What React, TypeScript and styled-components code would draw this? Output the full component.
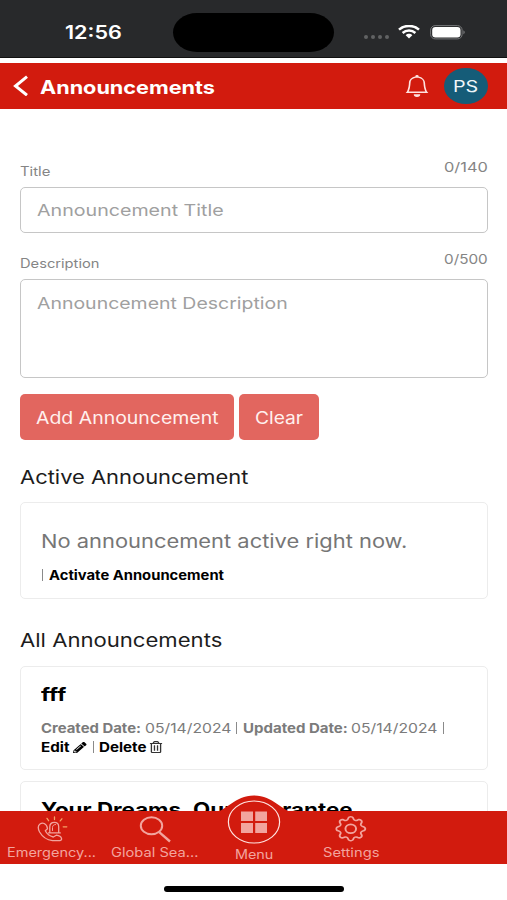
import React from "react";
import styled, { createGlobalStyle } from "styled-components";
import { BsBell, BsGear } from "react-icons/bs";
import { FaPencilAlt, FaRegTrashAlt } from "react-icons/fa";

const red = "#d21b0e";
const pink = "#f2a49e";

const GlobalStyle = createGlobalStyle`
  *, *::before, *::after { box-sizing: border-box; }
  body { margin: 0; background: #fff; font-family: Inter, "Liberation Sans", sans-serif; }
  svg { display: block; flex: none; }
`;

const Phone = styled.div`
  width: 507px;
  height: 900px;
  display: flex;
  flex-direction: column;
  overflow: hidden;
  background: #fff;
`;

/* Wide lettering: the slot reserves the final width, the glyphs are stretched to it. */
const Slot = styled.span<{ $w: number }>`
  display: block;
  flex: none;
  width: ${(p) => p.$w}px;
`;

const Glyphs = styled.span<{ $k: number; $size: number; $weight?: number; $color?: string }>`
  display: block;
  width: max-content;
  white-space: pre;
  transform: scaleX(${(p) => p.$k});
  transform-origin: 0 50%;
  font-size: ${(p) => p.$size}px;
  font-weight: ${(p) => p.$weight ?? 400};
  color: ${(p) => p.$color ?? "inherit"};
`;

type WideProps = { w: number; k?: number; size: number; weight?: number; color?: string; children: string };

const Wide = ({ w, k = 1.18, size, weight, color, children }: WideProps) => (
  <Slot $w={w}>
    <Glyphs $k={k} $size={size} $weight={weight} $color={color}>
      {children}
    </Glyphs>
  </Slot>
);

const WideIcon = styled.span<{ $w: number; $h: number; $color?: string }>`
  display: flex;
  flex: none;
  align-items: center;
  justify-content: center;
  width: ${(p) => p.$w}px;
  height: ${(p) => p.$h}px;
  color: ${(p) => p.$color ?? "inherit"};

  svg {
    transform: scaleX(${(p) => p.$w / p.$h});
  }
`;

const StatusBar = styled.div`
  flex: none;
  height: 58px;
  display: flex;
  align-items: flex-start;
  background: #28292b;
  border-bottom: 1px solid #111;
  color: #fff;
`;

const Clock = styled.div`
  width: 173px;
  padding: 21px 0 0 65px;
  line-height: 22px;
`;

const Island = styled.div`
  width: 161px;
  height: 39px;
  margin-top: 12.5px;
  border-radius: 24px / 19.5px;
  background: #000;
`;

const Dots = styled.div`
  display: flex;
  gap: 3px;
  margin: 34.5px 0 0 30px;
`;

const Dot = styled.i`
  width: 4px;
  height: 4px;
  border-radius: 50%;
  background: #616264;
`;

const StatusIcon = styled.div<{ $top: number; $left: number }>`
  margin: ${(p) => p.$top}px 0 0 ${(p) => p.$left}px;
`;

const Header = styled.header`
  flex: none;
  height: 46.5px;
  margin-top: 4.7px;
  padding: 0 19px 0 13px;
  display: flex;
  align-items: center;
  background: ${red};
  color: #fff;
`;

const HeaderTitle = styled.h1`
  flex: 1;
  margin: 3px 0 0 11px;
  line-height: 24px;
`;

const BellSlot = styled.div`
  margin-right: 14px;
  color: #ffe3e0;
`;

const Avatar = styled.div`
  width: 44px;
  height: 36px;
  padding-left: 9px;
  border-radius: 50%;
  background: #155c78;
  color: #eef6f9;
  line-height: 37px;
`;

const Main = styled.main`
  flex: 1;
  min-height: 0;
  overflow: hidden;
  padding: 48.8px 19.5px 0 20px;
`;

const LabelRow = styled.div`
  height: 29px;
  display: flex;
  justify-content: space-between;
  line-height: 18px;
  color: #858585;
`;

const LabelName = styled.label`
  padding-top: 5px;
`;

const Field = styled.div<{ $h: number; $top?: number }>`
  height: ${(p) => p.$h}px;
  padding: ${(p) => p.$top ?? 12}px 16px;
  border: 1.5px solid #c6c6c6;
  border-radius: 5px;
  line-height: 20px;
  color: #a0a0a0;
`;

const FieldGroup = styled.section<{ $gap: number }>`
  margin-bottom: ${(p) => p.$gap}px;
`;

const Buttons = styled.div`
  display: flex;
  gap: 5px;
`;

const Button = styled.button<{ $w: number }>`
  width: ${(p) => p.$w}px;
  height: 46px;
  padding: 1px 0 0 15.5px;
  border: 0;
  border-radius: 5px;
  background: #e2665f;
  color: #fff0ee;
  font: inherit;
  line-height: 46px;
  text-align: left;
`;

const SectionTitle = styled.h2<{ $top: number; $bottom?: number }>`
  margin: ${(p) => p.$top}px 0 ${(p) => p.$bottom ?? 14}px;
  line-height: 24px;
  color: #1c1c1c;
`;

const Card = styled.article<{ $h: number }>`
  height: ${(p) => p.$h}px;
  margin-bottom: 11px;
  padding: 15px 20px;
  border: 1.5px solid #ececec;
  border-radius: 5px;
  color: #7b7b7b;
`;

const CardTitle = styled.h3<{ $top?: number }>`
  margin: ${(p) => p.$top ?? 0}px 0 0;
  line-height: 24px;
  color: #000;
`;

const Line = styled.div<{ $top?: number }>`
  display: flex;
  align-items: center;
  height: 19px;
  margin-top: ${(p) => p.$top ?? 0}px;
  line-height: 19px;
`;

const Divider = styled.i<{ $before: number; $after: number }>`
  width: 1px;
  height: 12px;
  margin: 0 ${(p) => p.$after}px 0 ${(p) => p.$before}px;
  background: #8a8a8a;
`;

const Nav = styled.nav`
  position: relative;
  flex: none;
  height: 53px;
  display: flex;
  align-items: flex-start;
  background: ${red};
  color: ${pink};
`;

const Hump = styled.svg`
  position: absolute;
  left: 212px;
  top: -16px;
`;

const NavItem = styled.div<{ $w: number; $top?: number }>`
  position: relative;
  width: ${(p) => p.$w}px;
  display: flex;
  flex-direction: column;
  align-items: center;
  margin-top: ${(p) => p.$top ?? 5}px;
`;

const NavLabel = styled.div<{ $top: number }>`
  margin-top: ${(p) => p.$top}px;
  line-height: 18px;
`;

const HomeArea = styled.div`
  flex: none;
  height: 36px;
  padding-top: 22px;
`;

const HomePill = styled.div`
  width: 180px;
  height: 5.5px;
  margin-left: 164px;
  border-radius: 3px;
  background: #000;
`;

const WifiIcon = () => (
  <svg width="22" height="14" viewBox="0 0 22 14" fill="none" stroke="#fff" strokeWidth="2.5">
    <path d="M1 4.7C6.5-.3 15.500-.3 21 4.700" />
    <path d="M4.600 8C8.200 4.800 13.800 4.800 17.400 8" />
    <path d="M7.700 10.200C9.500 8.300 12.500 8.300 14.300 10.200L11 13.400Z" fill="#fff" stroke="none" />
  </svg>
);

const BatteryIcon = () => (
  <svg width="36" height="15" viewBox="0 0 36 15">
    <rect x=".6" y=".6" width="31.500" height="13.300" rx="4.500" fill="none" stroke="#77787a" />
    <rect x="2.200" y="2" width="28.300" height="10.500" rx="3.200" fill="#fff" />
    <path d="M33.500 5.200Q35.800 7.200 33.500 9.400Z" fill="#8b8c8e" />
  </svg>
);

const BackIcon = () => (
  <svg width="16" height="21" viewBox="0 0 16 21" fill="none" stroke="#fff" strokeWidth="3">
    <path d="M14 1.700L2.500 11L14 20.200" />
  </svg>
);

const EmergencyIcon = () => (
  <svg width="31" height="26" viewBox="0 0 31 26" fill="none" stroke="currentColor" strokeWidth="1.300" strokeLinecap="round" strokeLinejoin="round">
    <path d="M3 8C1 9.500.8 12.500 2.600 16C5.200 20.500 10 24 15.500 24.600H22.700C24.200 24.500 24.800 23.500 24.500 22.300C24 20.500 21.500 19.600 19.300 19.200L16.300 21C13 20.200 9.700 17.600 8.300 14.800L10.500 12.700C10.300 10.700 9.200 8.500 7.200 7.500C5.700 6.900 4.200 7.200 3 8Z" />
    <path d="M12.800 16.500V10.800C12.800 5 21.700 5 21.700 10.800V16.500M11.500 16.900H23.300" />
    <path d="M15.500 14.500V11.500C15.500 9.500 17 8.500 18.500 8.500" strokeWidth="1" />
    <path d="M17.500 1V3.500M10 2.400L11.600 4.700M24.900 2.800L23.200 4.900M26.200 10.800H29.800" stroke="#f5a266" />
  </svg>
);

const SearchIcon = () => (
  <svg width="32" height="27" viewBox="0 0 32 27" fill="none" stroke="currentColor" strokeWidth="2">
    <ellipse cx="12.500" cy="9.800" rx="10.700" ry="8.500" />
    <path d="M20.200 16.200L31 25.500" strokeWidth="2.400" />
  </svg>
);

const MenuIcon = () => (
  <svg width="54" height="44" viewBox="0 0 54 44">
    <ellipse cx="27" cy="22" rx="25.600" ry="21" fill="none" stroke="#ffe5e2" strokeWidth="1.200" />
    <path d="M14 11.500H26V21H14ZM28.200 11.500H40V21H28.200ZM14 23H26V33H14ZM28.200 23H40V33H28.200Z" fill={pink} />
  </svg>
);

export default function App() {
  return (
    <>
      <GlobalStyle />
      <Phone>
        <StatusBar>
          <Clock>
            <Wide w={58} size={18.3} weight={600}>12:56</Wide>
          </Clock>
          <Island />
          <Dots>
            <Dot />
            <Dot />
            <Dot />
            <Dot />
          </Dots>
          <StatusIcon $top={24.5} $left={9}>
            <WifiIcon />
          </StatusIcon>
          <StatusIcon $top={24.5} $left={10}>
            <BatteryIcon />
          </StatusIcon>
        </StatusBar>

        <Header>
          <BackIcon />
          <HeaderTitle>
            <Wide w={176} k={1.17} size={18.5} weight={700}>Announcements</Wide>
          </HeaderTitle>
          <BellSlot>
            <WideIcon $w={26} $h={22}>
              <BsBell size={22} />
            </WideIcon>
          </BellSlot>
          <Avatar>
            <Wide w={26} k={1.23} size={16}>PS</Wide>
          </Avatar>
        </Header>

        <Main>
          <FieldGroup $gap={16.5}>
            <LabelRow>
              <LabelName>
                <Wide w={32} k={1.19} size={12.5}>Title</Wide>
              </LabelName>
              <Wide w={44} k={1.26} size={13}>0/140</Wide>
            </LabelRow>
            <Field $h={46.5}>
              <Wide w={188} k={1.19} size={16.5}>Announcement Title</Wide>
            </Field>
          </FieldGroup>
          <FieldGroup $gap={15.5}>
            <LabelRow>
              <LabelName>
                <Wide w={80} k={1.175} size={12.5}>Description</Wide>
              </LabelName>
              <Wide w={44} k={1.175} size={13}>0/500</Wide>
            </LabelRow>
            <Field $h={99.5} $top={13}>
              <Wide w={252} k={1.18} size={16.5}>Announcement Description</Wide>
            </Field>
          </FieldGroup>

          <Buttons>
            <Button $w={214}>
              <Wide w={183} k={1.145} size={17}>Add Announcement</Wide>
            </Button>
            <Button $w={79.5}>
              <Wide w={49} k={1.13} size={17}>Clear</Wide>
            </Button>
          </Buttons>

          <SectionTitle $top={25.2} $bottom={13.3}>
            <Wide w={229} k={1.185} size={18.5}>Active Announcement</Wide>
          </SectionTitle>
          <Card $h={96.5}>
            <CardTitle $top={11}>
              <Wide w={368} k={1.183} size={18.5} color="#767676">No announcement active right now.</Wide>
            </CardTitle>
            <Line $top={12.5}>
              <Divider $before={1} $after={6} />
              <Wide w={176} k={1.137} size={13} weight={700} color="#000">Activate Announcement</Wide>
            </Line>
          </Card>

          <SectionTitle $top={29.5}>
            <Wide w={203} k={1.194} size={18.5}>All Announcements</Wide>
          </SectionTitle>
          <Card $h={104}>
            <CardTitle>
              <Wide w={26} k={1.23} size={18.5} weight={700}>fff</Wide>
            </CardTitle>
            <Line $top={12.5}>
              <Wide w={103.5} k={1.145} size={13} weight={700}>Created Date:</Wide>
              <Wide w={87} k={1.21} size={13}>05/14/2024</Wide>
              <Divider $before={4} $after={6} />
              <Wide w={108} k={1.155} size={13} weight={700}>Updated Date:</Wide>
              <Wide w={87} k={1.21} size={13}>05/14/2024</Wide>
              <Divider $before={5} $after={0} />
            </Line>
            <Line>
              <Wide w={31.5} k={1.17} size={13} weight={700} color="#000">Edit</Wide>
              <WideIcon $w={14} $h={12} $color="#000">
                <FaPencilAlt size={11.5} />
              </WideIcon>
              <Divider $before={6} $after={5.5} />
              <Wide w={49.5} k={1.165} size={13} weight={700} color="#000">Delete</Wide>
              <WideIcon $w={14} $h={12} $color="#333">
                <FaRegTrashAlt size={12} />
              </WideIcon>
            </Line>
          </Card>
          <Card $h={104}>
            <CardTitle>
              <Wide w={313} k={1.208} size={18.5} weight={700}>Your Dreams, Our Guarantee</Wide>
            </CardTitle>
          </Card>
        </Main>

        <Nav>
          <Hump width="84" height="18" viewBox="0 0 84 18">
            <path d="M0 18C16 16 22 .5 42 .5S68 16 84 18Z" fill={red} />
          </Hump>
          <NavItem $w={104}>
            <EmergencyIcon />
            <NavLabel $top={2}>
              <Wide w={90} k={1.16} size={12.5}>Emergency...</Wide>
            </NavLabel>
          </NavItem>
          <NavItem $w={102}>
            <SearchIcon />
            <NavLabel $top={1}>
              <Wide w={88} k={1.175} size={12.5}>Global Sea...</Wide>
            </NavLabel>
          </NavItem>
          <NavItem $w={96} $top={-11}>
            <MenuIcon />
            <NavLabel $top={2}>
              <Wide w={39} k={1.15} size={12.5}>Menu</Wide>
            </NavLabel>
          </NavItem>
          <NavItem $w={98}>
            <WideIcon $w={31} $h={25.5}>
              <BsGear size={25.5} />
            </WideIcon>
            <NavLabel $top={2}>
              <Wide w={57} k={1.18} size={12.5}>Settings</Wide>
            </NavLabel>
          </NavItem>
        </Nav>
        <HomeArea>
          <HomePill />
        </HomeArea>
      </Phone>
    </>
  );
}
